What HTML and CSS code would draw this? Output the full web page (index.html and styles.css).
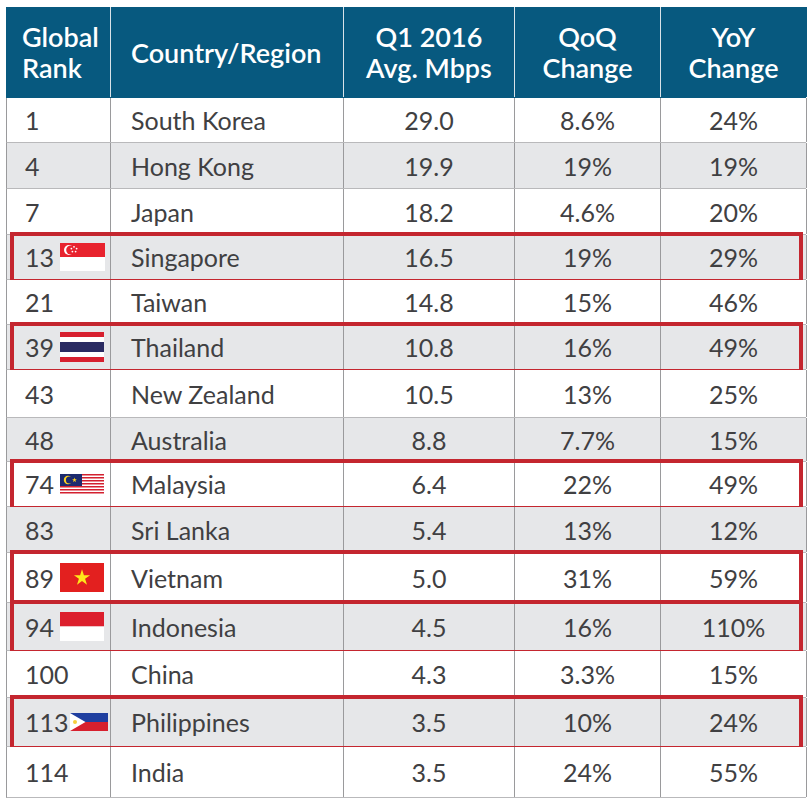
FILE: index.html
```html
<!DOCTYPE html>
<html>
<head>
<meta charset="utf-8">
<link rel="stylesheet" href="styles.css">
</head>
<body>
<div class="table">
  <div class="row head">
    <div class="cell rank">Global<br>Rank</div>
    <div class="cell name">Country/Region</div>
    <div class="cell num">Q1 2016<br>Avg. Mbps</div>
    <div class="cell num">QoQ<br>Change</div>
    <div class="cell num">YoY<br>Change</div>
  </div>
  <div class="row"><div class="cell rank"><span class="n">1</span></div><div class="cell name">South Korea</div><div class="cell num">29.0</div><div class="cell num">8.6%</div><div class="cell num">24%</div></div>
  <div class="row"><div class="cell rank"><span class="n">4</span></div><div class="cell name">Hong Kong</div><div class="cell num">19.9</div><div class="cell num">19%</div><div class="cell num">19%</div></div>
  <div class="row"><div class="cell rank"><span class="n">7</span></div><div class="cell name">Japan</div><div class="cell num">18.2</div><div class="cell num">4.6%</div><div class="cell num">20%</div></div>
  <div class="row hl"><div class="cell rank"><span class="n">13</span>
    <svg class="flag sg" viewBox="0 0 45 28"><rect width="45" height="14" fill="#e8232e"/><rect y="14" width="45" height="14" fill="#fff"/><circle cx="9" cy="7" r="5" fill="#fff"/><circle cx="10.8" cy="7" r="4.6" fill="#e8232e"/><g fill="#fff"><circle cx="14" cy="3.8" r="0.9"/><circle cx="16.6" cy="5.6" r="0.9"/><circle cx="15.6" cy="8.6" r="0.9"/><circle cx="12.4" cy="8.6" r="0.9"/><circle cx="11.4" cy="5.6" r="0.9"/></g></svg>
  </div><div class="cell name">Singapore</div><div class="cell num">16.5</div><div class="cell num">19%</div><div class="cell num">29%</div></div>
  <div class="row"><div class="cell rank"><span class="n">21</span></div><div class="cell name">Taiwan</div><div class="cell num">14.8</div><div class="cell num">15%</div><div class="cell num">46%</div></div>
  <div class="row hl"><div class="cell rank"><span class="n">39</span>
    <svg class="flag th" viewBox="0 0 44 30"><rect width="44" height="30" fill="#d7202f"/><rect y="5" width="44" height="20" fill="#fff"/><rect y="10" width="44" height="10" fill="#2a2b62"/></svg>
  </div><div class="cell name">Thailand</div><div class="cell num">10.8</div><div class="cell num">16%</div><div class="cell num">49%</div></div>
  <div class="row"><div class="cell rank"><span class="n">43</span></div><div class="cell name">New Zealand</div><div class="cell num">10.5</div><div class="cell num">13%</div><div class="cell num">25%</div></div>
  <div class="row"><div class="cell rank"><span class="n">48</span></div><div class="cell name">Australia</div><div class="cell num">8.8</div><div class="cell num">7.7%</div><div class="cell num">15%</div></div>
  <div class="row hl"><div class="cell rank"><span class="n">74</span>
    <svg class="flag my" viewBox="0 0 44 21"><rect width="44" height="21" fill="#fff"/><g fill="#d3202f"><rect y="0" width="44" height="1.5"/><rect y="3" width="44" height="1.5"/><rect y="6" width="44" height="1.5"/><rect y="9" width="44" height="1.5"/><rect y="12" width="44" height="1.5"/><rect y="15" width="44" height="1.5"/><rect y="18" width="44" height="1.5"/></g><rect width="22" height="12" fill="#1c2a6e"/><circle cx="8" cy="6" r="4.2" fill="#ffd21f"/><circle cx="9.4" cy="6" r="3.5" fill="#1c2a6e"/><polygon transform="translate(14.5 6) scale(2.6)" fill="#ffd21f" points="0,-1 .225,-.309 .951,-.309 .363,.118 .588,.809 0,.382 -.588,.809 -.363,.118 -.951,-.309 -.225,-.309"/></svg>
  </div><div class="cell name">Malaysia</div><div class="cell num">6.4</div><div class="cell num">22%</div><div class="cell num">49%</div></div>
  <div class="row"><div class="cell rank"><span class="n">83</span></div><div class="cell name">Sri Lanka</div><div class="cell num">5.4</div><div class="cell num">13%</div><div class="cell num">12%</div></div>
  <div class="row hl"><div class="cell rank"><span class="n">89</span>
    <svg class="flag vn" viewBox="0 0 44 29"><rect width="44" height="29" fill="#e3201f"/><polygon transform="translate(22 14.8) scale(8.5)" fill="#ffe81a" points="0,-1 .225,-.309 .951,-.309 .363,.118 .588,.809 0,.382 -.588,.809 -.363,.118 -.951,-.309 -.225,-.309"/></svg>
  </div><div class="cell name">Vietnam</div><div class="cell num">5.0</div><div class="cell num">31%</div><div class="cell num">59%</div></div>
  <div class="row hl"><div class="cell rank"><span class="n">94</span>
    <svg class="flag id" viewBox="0 0 44 29"><rect width="44" height="14.5" fill="#dc1f2d"/><rect y="14.5" width="44" height="14.5" fill="#fff"/></svg>
  </div><div class="cell name">Indonesia</div><div class="cell num">4.5</div><div class="cell num">16%</div><div class="cell num">110%</div></div>
  <div class="row"><div class="cell rank"><span class="n">100</span></div><div class="cell name">China</div><div class="cell num">4.3</div><div class="cell num">3.3%</div><div class="cell num">15%</div></div>
  <div class="row hl"><div class="cell rank"><span class="n">113</span>
    <svg class="flag ph" viewBox="0 0 38 18"><rect width="38" height="9" fill="#1f3fa0"/><rect y="9" width="38" height="9" fill="#d7202e"/><polygon points="0,0 15.5,9 0,18" fill="#fff"/><circle cx="5" cy="9" r="2" fill="#f6cf3b"/></svg>
  </div><div class="cell name">Philippines</div><div class="cell num">3.5</div><div class="cell num">10%</div><div class="cell num">24%</div></div>
  <div class="row"><div class="cell rank"><span class="n">114</span></div><div class="cell name">India</div><div class="cell num">3.5</div><div class="cell num">24%</div><div class="cell num">55%</div></div>
</div>
</body>
</html>
```
FILE: styles.css
```css
html, body {
  margin: 0;
  padding: 0;
  background: #ffffff;
}
body {
  font-family: "Lato", "Open Sans", sans-serif;
  color: #404042;
}
.table {
  margin: 7px 0 0 6px;
  width: 800px;
  display: flex;
  flex-direction: column;
}
.row {
  position: relative;
  display: grid;
  grid-template-columns: 104px 233px 171px 146px 146px;
  box-sizing: border-box;
  height: 46px;
  border-bottom: 1px solid #b9b9bb;
  border-left: 1px solid #9a9a9c;
  font-size: 25px;
}
.row:nth-child(odd) { background: #e6e7e9; }
.row:nth-child(even) { background: #ffffff; }
.cell {
  display: flex;
  align-items: center;
  box-sizing: border-box;
  border-right: 1px solid #9a9a9c;
  white-space: nowrap;
}
.rank { padding-left: 18px; }
.name { padding-left: 20px; }
.num { justify-content: center; text-align: center; }
.n { min-width: 35px; }
.flag { display: block; flex: none; }
.sg { width: 45px; height: 28px; }
.th { width: 44px; height: 30px; }
.my { width: 44px; height: 21px; }
.vn { width: 44px; height: 29px; }
.id { width: 44px; height: 29px; }
.ph { width: 38px; height: 18px; margin-left: 1px; }

.row.head {
  height: 91px;
  background: #07597f;
  color: #ffffff;
  font-weight: 600;
  font-size: 27px;
  line-height: 31px;
  border-left-color: #07597f;
  border-bottom: 1px solid #07597f;
}
.head .cell { border-right: 1px solid #d8e2e8; }
.head .cell:last-child { border-right-color: #07597f; }
.head .rank { padding-left: 15px; }

.row.hl::after {
  content: "";
  position: absolute;
  left: 3px;
  right: 3px;
  top: -3px;
  bottom: -4px;
  border: 4px solid #c4262f;
  pointer-events: none;
}

.row:nth-child(2) { height: 45px; }
.row:nth-child(3) { height: 46px; }
.row:nth-child(4) { height: 46px; }
.row:nth-child(5) { height: 45px; }
.row:nth-child(6) { height: 45px; }
.row:nth-child(7) { height: 45px; }
.row:nth-child(8) { height: 48px; }
.row:nth-child(9) { height: 44px; }
.row:nth-child(10) { height: 45px; }
.row:nth-child(11) { height: 46px; }
.row:nth-child(12) { height: 50px; }
.row:nth-child(13) { height: 48px; }
.row:nth-child(14) { height: 47px; }
.row:nth-child(15) { height: 49px; }
.row:nth-child(16) { height: 51px; }
```
